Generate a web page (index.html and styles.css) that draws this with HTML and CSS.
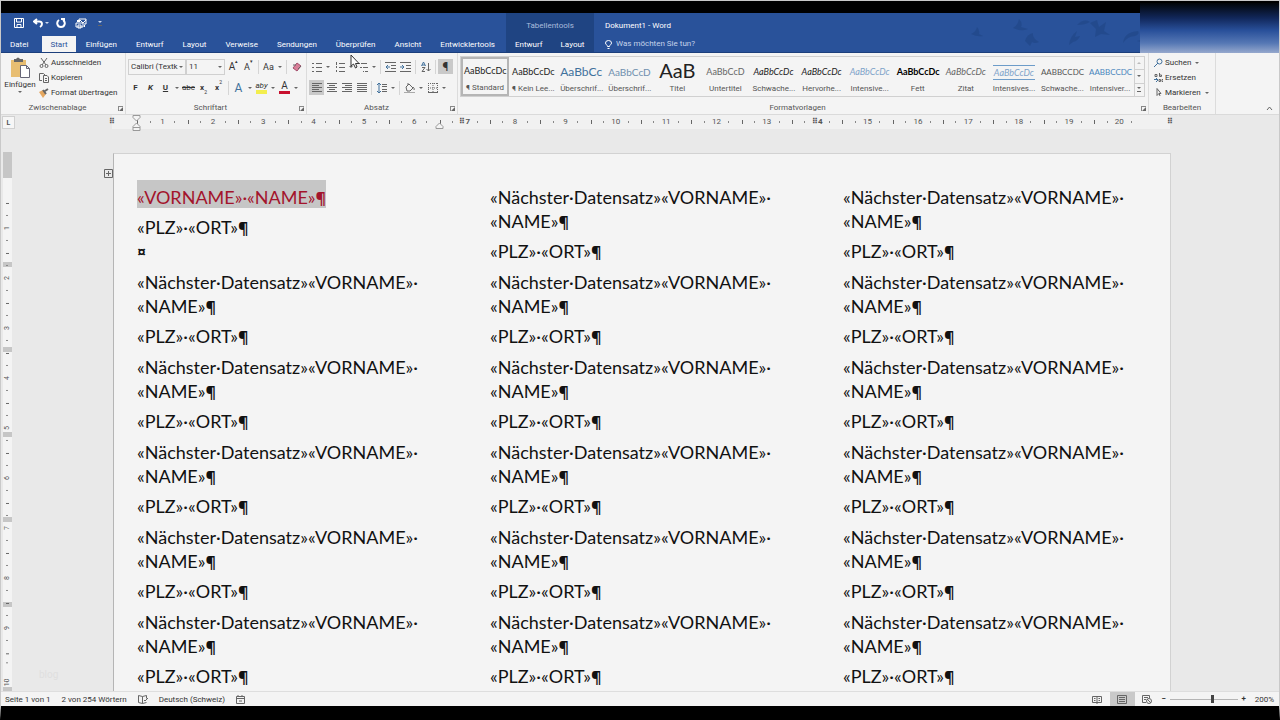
FILE: index.html
```
<!DOCTYPE html>
<html lang="de">
<head>
<meta charset="UTF-8">
<title>Dokument1 - Word</title>
<link rel="stylesheet" href="styles.css">
</head>
<body>
<header class="titlebar">
  <div class="bar-left">
    <div class="quick">
      <button aria-label="Speichern"><svg width="10" height="10" viewBox="0 0 10 10"><path d="M.5.5h9v9h-9zM2.500.5v3.500h5V.5M3 9.500V6.500h4v3"/></svg></button>
      <button aria-label="Rückgängig"><svg width="10" height="10" viewBox="0 0 10 10"><path class="bold" d="M4 1 1 3.500 4 6M1.500 3.500H6c4 0 3.500 4 1 5.500"/></svg><i class="caret"></i></button>
      <button aria-label="Wiederholen"><svg width="10" height="10" viewBox="0 0 10 10"><path class="bold" d="M3 2C0 4 1 9 5 9s5-5 2-7M5 1h3v3"/></svg></button>
      <button aria-label="Seriendruck"><svg width="12" height="11" viewBox="0 0 12 11"><path d="M1 5h7v4H1zM4 4V1h7v5H9M3 7h3v3H3zM5 2l3 3 3-3"/><path class="bold" d="M2 3h3M9 8h1"/></svg></button>
      <button aria-label="Schnellzugriff anpassen"><i class="caret lined"></i></button>
    </div>
    <nav class="tabs">
      <a href="#" class="file">Datei</a>
      <a href="#" class="active">Start</a>
      <a href="#">Einfügen</a>
      <a href="#">Entwurf</a>
      <a href="#">Layout</a>
      <a href="#">Verweise</a>
      <a href="#">Sendungen</a>
      <a href="#">Überprüfen</a>
      <a href="#">Ansicht</a>
      <a href="#">Entwicklertools</a>
    </nav>
  </div>
  <div class="bar-tools">
    <p>Tabellentools</p>
    <nav class="tabs">
      <a href="#">Entwurf</a>
      <a href="#">Layout</a>
    </nav>
  </div>
  <div class="bar-right">
    <h1>Dokument1 - Word</h1>
    <label class="tellme">
      <svg width="7" height="9" viewBox="0 0 7 9"><path d="M2.500 6.500C2.500 5 .5 4.500.5 3a3 2.500 0 0 1 6 0c0 1.500-2 2-2 3.500zM2.500 8.500h2"/></svg>
      <input type="text" placeholder="Was möchten Sie tun?" aria-label="Was möchten Sie tun?">
    </label>
  </div>
  <svg class="leaves" width="180" height="32" viewBox="0 0 180 32">
    <path d="M6 17q5-2 6-7 3 3 2 7l4 2q-6 1-12-2zM48 11q5-3 6-9 4 4 2 8l7 2q-7 3-15-1zM60 24q2-7 8-8-1 5 6 9-4 2-7 0l-2 4zM104 28q1-9 8-14l-2 6 5-1q-2 5-7 6zM112 8q7-7 13-3-5 3-13 3zM125 6l7-3 2 7 7-5-2 9 6 4-9-1-6 3 1-8zM158 26q1-11 15-12 2 3-3 5-7 0-12 7zM172 24l7-2 1 4z"/>
  </svg>
  <div class="shade"></div>
</header>

<section class="ribbon">
  <div class="group clipboard">
    <div class="tools">
      <button class="paste">
        <svg width="22" height="22" viewBox="0 0 22 22"><path fill="#e8be72" stroke="none" d="M2 3h15v17H2z"/><path fill="#666" stroke="none" d="M5 2h2q2-3 4 0h3v3H5z"/><path fill="#fff" stroke="#667" d="M11.500 8.500h6l3 3v9h-9zM17.500 8.500v3h3"/></svg>
        Einfügen
        <i class="caret"></i>
      </button>
      <div class="stack">
        <button><svg width="10" height="10" viewBox="0 0 10 10"><path d="m2 0 5 7M8 0 3 7"/><circle cx="2.500" cy="8" r="1.500"/><circle cx="7.500" cy="8" r="1.500"/></svg>Ausschneiden</button>
        <button><svg width="10" height="10" viewBox="0 0 10 10"><path d="M3 7.500H.5v-7h4L6 2M4.500 2.500H8l1.500 1.500v5.500h-5zM6 5.500h2M6 7.500h2"/></svg>Kopieren</button>
        <button><svg width="10" height="10" viewBox="0 0 10 10"><path fill="#e6a860" stroke="none" d="m0 4 4-2 3 4-3 4z"/><path class="bold" d="m4 2 3 4M6 3l3-2"/></svg>Format übertragen</button>
      </div>
    </div>
    <footer>Zwischenablage<i class="launcher"></i></footer>
  </div>

  <div class="group font">
    <div class="rows">
      <div class="row">
        <span class="combo family"><select aria-label="Schriftart"><option>Calibri (Textk</option></select></span>
        <span class="combo size"><select aria-label="Schriftgrad"><option>11</option></select></span>
        <button class="big">A<sup>▴</sup></button>
        <button class="small">A<sup>▾</sup></button>
        <i class="sep"></i>
        <button class="small">Aa</button><i class="caret"></i>
        <i class="sep"></i>
        <button aria-label="Formatierung löschen"><svg width="10" height="10" viewBox="0 0 10 10"><path fill="#d77f98" stroke="#a34d6b" d="m1 6 4-5 4 3-4 5z"/><path d="M1 3h3M6 7l3-3"/></svg></button>
      </div>
      <div class="row">
        <button><b>F</b></button>
        <button><b><em>K</em></b></button>
        <button><b><u>U</u></b></button><i class="caret"></i>
        <button><s>abc</s></button>
        <button><b>x</b><sub>2</sub></button>
        <button><b>x</b><sup>2</sup></button>
        <i class="sep"></i>
        <button class="effect">A</button><i class="caret"></i>
        <button class="marker">aby</button><i class="caret"></i>
        <button class="color">A</button><i class="caret"></i>
      </div>
    </div>
    <footer>Schriftart<i class="launcher"></i></footer>
  </div>

  <div class="group paragraph">
    <div class="rows">
      <div class="row">
        <button aria-label="Aufzählung"><svg width="10" height="10" viewBox="0 0 10 10"><path d="M0 1.500h2M0 5.500h2M0 9.500h2M4 1.500h6M4 5.500h6M4 9.500h6"/></svg></button><i class="caret"></i>
        <button aria-label="Nummerierung"><svg width="10" height="10" viewBox="0 0 10 10"><path d="M1.500 0v3M1.500 4v2M1.500 8v2M4 1.500h6M4 5.500h6M4 9.500h6"/></svg></button><i class="caret"></i>
        <button aria-label="Liste mit mehreren Ebenen"><svg width="10" height="10" viewBox="0 0 10 10"><path d="M0 1.500h2M2 5.500h2M5 9.500h1M3 1.500h6M5 5.500h5M7 9.500h3"/></svg></button><i class="caret"></i>
        <i class="sep"></i>
        <button aria-label="Einzug verkleinern"><svg width="11" height="10" viewBox="0 0 11 10"><path d="M0 .5h11M6 3.500h5M6 6.500h5M0 9.500h11"/><path class="blue" d="M5 5H1M3 3 1 5l2 2"/></svg></button>
        <button aria-label="Einzug vergrößern"><svg width="11" height="10" viewBox="0 0 11 10"><path d="M0 .5h11M6 3.500h5M6 6.500h5M0 9.500h11"/><path class="blue" d="M0 5h4M2 3l2 2-2 2"/></svg></button>
        <i class="sep"></i>
        <button aria-label="Sortieren"><svg width="10" height="10" viewBox="0 0 10 10"><path class="blue" d="m.5 4 2-4 2 4M1 3h3"/><path d="M1 5.500h3l-3 4h3M7.500 1v8M5.500 7l2 2 2-2"/></svg></button>
        <i class="sep"></i>
        <button class="on pilcrow">¶</button>
      </div>
      <div class="row">
        <button class="on" aria-label="Linksbündig"><svg width="10" height="9" viewBox="0 0 10 9"><path d="M0 .5h10M0 2.500h7M0 4.500h10M0 6.500h7M0 8.500h10"/></svg></button>
        <button aria-label="Zentriert"><svg width="10" height="9" viewBox="0 0 10 9"><path d="M0 .5h10M2 2.500h6M0 4.500h10M2 6.500h6M0 8.500h10"/></svg></button>
        <button aria-label="Rechtsbündig"><svg width="10" height="9" viewBox="0 0 10 9"><path d="M0 .5h10M3 2.500h7M0 4.500h10M3 6.500h7M0 8.500h10"/></svg></button>
        <button aria-label="Blocksatz"><svg width="10" height="9" viewBox="0 0 10 9"><path d="M0 .5h10M0 2.500h10M0 4.500h10M0 6.500h10M0 8.500h10"/></svg></button>
        <i class="sep"></i>
        <button aria-label="Zeilenabstand"><svg width="10" height="10" viewBox="0 0 10 10"><path d="M5 1.500h5M5 3.500h5M5 6.500h5M5 8.500h5"/><path class="blue" d="M2 0v10M0 2l2-2 2 2M0 8l2 2 2-2"/></svg></button><i class="caret"></i>
        <i class="sep"></i>
        <button aria-label="Schattierung"><svg width="12" height="10" viewBox="0 0 12 10"><path d="m2 4 3-3 4 4-3 3H3zM4 2V0M9 4q2 2 1 3"/><path stroke="#aaa" d="M0 9.500h11"/></svg></button><i class="caret"></i>
        <button aria-label="Rahmen"><svg width="10" height="10" viewBox="0 0 10 10"><path stroke-dasharray="1 1" d="M.5 0v9M5 0v9M9.500 0v9M0 .5h10M0 5h10"/><path d="M0 9.500h10"/></svg></button><i class="caret"></i>
      </div>
    </div>
    <footer>Absatz<i class="launcher"></i></footer>
  </div>

  <div class="group styles">
    <div class="gallery">
      <button class="selected"><span>AaBbCcDc</span>¶ Standard</button>
      <button><span>AaBbCcDc</span>¶ Kein Lee...</button>
      <button><span class="h1">AaBbCc</span>Überschrif...</button>
      <button><span class="h2">AaBbCcD</span>Überschrif...</button>
      <button><span class="title">AaB</span>Titel</button>
      <button><span class="grey">AaBbCcD</span>Untertitel</button>
      <button><span class="italic">AaBbCcDc</span>Schwache...</button>
      <button><span class="italic">AaBbCcDc</span>Hervorhe...</button>
      <button><span class="italic pale">AaBbCcDc</span>Intensive...</button>
      <button><span class="strong">AaBbCcDc</span>Fett</button>
      <button><span class="italic dim">AaBbCcDc</span>Zitat</button>
      <button><span class="italic pale ruled">AaBbCcDc</span>Intensives...</button>
      <button><span class="caps">AABBCCDC</span>Schwache...</button>
      <button><span class="caps link">AABBCCDC</span>Intensiver...</button>
      <div class="scroller">
        <button aria-label="Zurück"><i class="caret up"></i></button>
        <button aria-label="Weiter"><i class="caret"></i></button>
        <button aria-label="Mehr"><i class="caret lined"></i></button>
      </div>
    </div>
    <footer>Formatvorlagen<i class="launcher"></i></footer>
  </div>

  <div class="group editing">
    <div class="tools">
      <div class="stack">
        <button><svg width="9" height="9" viewBox="0 0 9 9"><circle class="blue" cx="5.500" cy="3.500" r="2.500"/><path class="blue" d="m4 5-4 4"/></svg>Suchen<i class="caret"></i></button>
        <button><svg width="9" height="10" viewBox="0 0 9 10"><path d="M1 3.500h2v-2H1zM5.500 0v3.500h2V2h-2"/><path class="blue" d="M0 6.500h3M2 5l2 2-2 2"/><path d="M5 6.500h1.500v2H5zM9 6.500H8v2h1"/></svg>Ersetzen</button>
        <button><svg width="9" height="9" viewBox="0 0 9 9"><path d="M3 .5v7l2-2h2zM5 5l1 3"/></svg>Markieren<i class="caret"></i></button>
      </div>
    </div>
    <footer>Bearbeiten</footer>
  </div>
  <button class="collapse" aria-label="Menüband reduzieren"><svg width="7" height="5" viewBox="0 0 7 5"><path d="m1 4 2.500-3L6 4"/></svg></button>
  <svg class="pointer" width="11" height="15" viewBox="0 0 11 15"><path d="M1 1v11l2.500-2 2 4L7 13 5.500 9.500H9z"/></svg>
</section>

<div class="ruler">
  <button class="tabstop" aria-label="Tabstopp">L</button>
  <ol>
    <li class="grid">⠿</li><li>1</li><li>2</li><li>3</li><li>4</li><li>5</li><li>6</li><li class="grid">⠿7</li><li>8</li><li>9</li><li>10</li><li>11</li><li>12</li><li>13</li><li class="grid">⠿4</li><li>15</li><li>16</li><li>17</li><li>18</li><li>19</li><li>20</li><li class="grid">⠿</li>
  </ol>
  <svg class="indent" width="9" height="17" viewBox="0 0 9 17"><path d="M1 .5h7v2L4.500 6 1 2.500zM4.500 8 8 11.500v4H1v-4zM1 12.500h7"/></svg>
  <svg class="indent right" width="9" height="17" viewBox="0 0 9 17"><path d="M4.500 8 8 11.500v2H1v-2z"/></svg>
</div>

<main>
  <ol class="side-ruler">
    <li>1</li><li>2</li><li>3</li><li>4</li><li>5</li><li>6</li><li>7</li><li>8</li><li>9</li><li>10</li>
  </ol>
  <div class="canvas">
    <button class="move" aria-label="Tabelle verschieben"><svg width="9" height="9" viewBox="0 0 9 9"><path d="M.5.5h8v8h-8zM4.500 2v5M2 4.500h5"/></svg></button>
    <article class="page">
      <table>
        <tr>
          <td><p><mark>«VORNAME»·«NAME»<b>¶</b></mark></p><p>«PLZ»·«ORT»<b>¶</b><br><b>¤</b></p></td>
          <td><p>«Nächster·Datensatz»«VORNAME»·<br>«NAME»<b>¶</b></p><p>«PLZ»·«ORT»<b>¶</b></p></td>
          <td><p>«Nächster·Datensatz»«VORNAME»·<br>«NAME»<b>¶</b></p><p>«PLZ»·«ORT»<b>¶</b></p></td>
        </tr>
        <tr>
          <td><p>«Nächster·Datensatz»«VORNAME»·<br>«NAME»<b>¶</b></p><p>«PLZ»·«ORT»<b>¶</b></p></td>
          <td><p>«Nächster·Datensatz»«VORNAME»·<br>«NAME»<b>¶</b></p><p>«PLZ»·«ORT»<b>¶</b></p></td>
          <td><p>«Nächster·Datensatz»«VORNAME»·<br>«NAME»<b>¶</b></p><p>«PLZ»·«ORT»<b>¶</b></p></td>
        </tr>
        <tr>
          <td><p>«Nächster·Datensatz»«VORNAME»·<br>«NAME»<b>¶</b></p><p>«PLZ»·«ORT»<b>¶</b></p></td>
          <td><p>«Nächster·Datensatz»«VORNAME»·<br>«NAME»<b>¶</b></p><p>«PLZ»·«ORT»<b>¶</b></p></td>
          <td><p>«Nächster·Datensatz»«VORNAME»·<br>«NAME»<b>¶</b></p><p>«PLZ»·«ORT»<b>¶</b></p></td>
        </tr>
        <tr>
          <td><p>«Nächster·Datensatz»«VORNAME»·<br>«NAME»<b>¶</b></p><p>«PLZ»·«ORT»<b>¶</b></p></td>
          <td><p>«Nächster·Datensatz»«VORNAME»·<br>«NAME»<b>¶</b></p><p>«PLZ»·«ORT»<b>¶</b></p></td>
          <td><p>«Nächster·Datensatz»«VORNAME»·<br>«NAME»<b>¶</b></p><p>«PLZ»·«ORT»<b>¶</b></p></td>
        </tr>
        <tr>
          <td><p>«Nächster·Datensatz»«VORNAME»·<br>«NAME»<b>¶</b></p><p>«PLZ»·«ORT»<b>¶</b></p></td>
          <td><p>«Nächster·Datensatz»«VORNAME»·<br>«NAME»<b>¶</b></p><p>«PLZ»·«ORT»<b>¶</b></p></td>
          <td><p>«Nächster·Datensatz»«VORNAME»·<br>«NAME»<b>¶</b></p><p>«PLZ»·«ORT»<b>¶</b></p></td>
        </tr>
        <tr>
          <td><p>«Nächster·Datensatz»«VORNAME»·<br>«NAME»<b>¶</b></p><p>«PLZ»·«ORT»<b>¶</b></p></td>
          <td><p>«Nächster·Datensatz»«VORNAME»·<br>«NAME»<b>¶</b></p><p>«PLZ»·«ORT»<b>¶</b></p></td>
          <td><p>«Nächster·Datensatz»«VORNAME»·<br>«NAME»<b>¶</b></p><p>«PLZ»·«ORT»<b>¶</b></p></td>
        </tr>
      </table>
    </article>
    <span class="watermark">blog</span>
  </div>
</main>

<footer class="status">
  <span>Seite 1 von 1</span>
  <span>2 von 254 Wörtern</span>
  <svg width="10" height="9" viewBox="0 0 10 9"><path d="M4.500 8.500V1.500L.5.5v7zM4.500 1.500 8.500.5v3M4.500 8.500l4-1M6 5l1 1 3-3"/></svg>
  <span>Deutsch (Schweiz)</span>
  <svg width="9" height="9" viewBox="0 0 9 9"><path d="M.5 1.500h8v7h-8zM0 3.500h9M2 0v2M6 0v2M3 6h3"/></svg>
  <div class="views">
    <button aria-label="Lesemodus"><svg width="10" height="9" viewBox="0 0 10 9"><path d="M.5 1.500h9v6h-9zM5 1v8M2 3.500h1.500M2 5.500h1.500M6.500 3.500H8M6.500 5.500H8"/></svg></button>
    <button class="on" aria-label="Drucklayout"><svg width="10" height="9" viewBox="0 0 10 9"><path d="M.5.5h9v8h-9zM2 2.500h6M2 4.500h6M2 6.500h6"/></svg></button>
    <button aria-label="Weblayout"><svg width="10" height="9" viewBox="0 0 10 9"><path d="M4 7.500H.5v-7h7V3M2 2.500h4M2 4.500h2"/><circle cx="7" cy="6" r="2.500"/><path d="m5 4 4 4"/></svg></button>
  </div>
  <div class="zoom">
    <button>−</button>
    <input type="range" aria-label="Zoom" min="0" max="100" value="63">
    <button>+</button>
  </div>
  <span>200%</span>
</footer>
</body>
</html>
```
FILE: styles.css
```
*, *:before, *:after{
  box-sizing: border-box;
}
body{
  margin: 0;
  height: 100vh;
  display: flex;
  flex-direction: column;
  overflow: hidden;
  background: #e9e9e9;
  border: 1px solid #c9c9c9;
  border-bottom: 14px solid #000;
  color: #333;
  font-family: Roboto, 'Open Sans', sans-serif;
  font-size: 8px;
  line-height: 12px;
}
p, h1, ol{
  margin: 0;
  padding: 0;
  font-size: 8px;
  font-weight: normal;
  list-style: none;
}
button, input, select{
  margin: 0;
  padding: 0;
  border: 0;
  background: none;
  color: inherit;
  font: inherit;
}
a{
  color: inherit;
  text-decoration: none;
}
svg{
  flex: none;
  fill: none;
  stroke: #666;
}
.bold{
  stroke-width: 2;
}
.blue{
  stroke: #41719c;
}
.caret{
  width: 8px;
  flex: none;
  display: flex;
  justify-content: center;
}
.caret:before{
  content: '';
  border: 2px solid transparent;
  border-top-color: #666;
  border-bottom: 0;
}
.caret.lined:before{
  width: 4px;
  height: 5px;
  border-top: 2px solid #666;
  background: linear-gradient(#666, #666) center bottom / 4px 1px no-repeat border-box;
}
.caret.up{
  transform: rotate(180deg);
  opacity: 0.4;
}

/* title bar */
.titlebar{
  position: relative;
  display: flex;
  flex: none;
  height: 52px;
  border-top: 12px solid #000;
  border-bottom: 1px solid #1c3f7c;
  background: #29529a;
  color: #fff;
}
.titlebar svg{
  stroke: #fff;
}
.bar-left, .bar-tools, .bar-right{
  display: flex;
  flex-direction: column;
  justify-content: space-between;
}
.bar-left{
  width: 505px;
}
.quick{
  display: flex;
  align-items: center;
  gap: 9px;
  height: 20px;
  padding-left: 13px;
}
.quick button{
  display: flex;
  align-items: center;
}
.quick button:nth-child(2){
  margin-right: -4px;
}
.quick .caret:before{
  border-top-color: #cdd9ee;
}
.tabs{
  display: flex;
  line-height: 15px;
}
.tabs a{
  padding: 1px 9px 0 10px;
  white-space: nowrap;
}
.tabs .file{
  padding: 1px 14px 0 9px;
}
.tabs .active{
  padding: 1px 8px 0;
  background: #f4f4f4;
  color: #29529a;
}
.bar-tools{
  width: 88px;
  background: #1f4482;
}
.bar-tools p, .bar-right h1{
  line-height: 25px;
}
.bar-tools p{
  height: 23px;
  text-align: center;
  color: #a9bcdd;
}
.bar-right h1{
  height: 23px;
}
.bar-tools .tabs a{
  padding: 1px 9px 0;
}
.bar-right{
  padding-left: 11px;
}
.tellme{
  display: flex;
  align-items: center;
  gap: 4px;
  height: 16px;
}
.tellme input{
  width: 120px;
}
.tellme input::placeholder{
  color: #c5d3ea;
}
.titlebar .leaves{
  position: absolute;
  right: 134px;
  top: 4px;
  fill: #1f4482;
  stroke: none;
  opacity: 0.5;
}
.shade{
  position: absolute;
  right: 0;
  top: -10px;
  width: 139px;
  height: 50px;
  background: linear-gradient(#020508, #11275a 30%, #29509a 55%, #5577b4 80%, #96a8cd);
}

/* ribbon */
.ribbon{
  position: relative;
  display: flex;
  flex: none;
  height: 61px;
  background: #f4f4f4;
}
.ribbon button{
  white-space: nowrap;
}
.group{
  display: flex;
  flex-direction: column;
  justify-content: space-between;
  padding-top: 2px;
  border-right: 1px solid #dcdcdc;
}
.group footer{
  position: relative;
  padding-right: 11px;
  text-align: center;
  color: #555;
}
.editing footer{
  padding-right: 0;
}
.launcher{
  position: absolute;
  right: 2px;
  top: 4px;
  width: 5px;
  height: 5px;
  border: solid #888;
  border-width: 1px 0 0 1px;
}
.launcher:after{
  content: '';
  position: absolute;
  right: 0;
  bottom: 0;
  border: 2px solid #666;
  border-top-color: transparent;
  border-left-color: transparent;
}
.clipboard{
  width: 125px;
}
.font{
  width: 181px;
}
.paragraph{
  width: 151px;
}
.styles{
  flex: 1;
  min-width: 0;
}
.editing{
  width: 67px;
}
.tools{
  display: flex;
}
.paste{
  width: 38px;
  display: flex;
  flex-direction: column;
  align-items: center;
  padding-top: 2px;
}
.stack{
  display: flex;
  flex-direction: column;
}
.stack button{
  display: flex;
  align-items: center;
  gap: 2px;
  height: 15px;
}
.editing .stack{
  padding-left: 5px;
}
.rows{
  display: flex;
  flex-direction: column;
  gap: 4px;
  padding: 3px 0 0 2px;
}
.row{
  display: flex;
  align-items: center;
  height: 17px;
}
.row button{
  width: 15px;
  height: 15px;
  display: flex;
  align-items: center;
  justify-content: center;
}
.row sup, .row sub{
  font-size: 5px;
  line-height: 5px;
}
.row sup{
  align-self: flex-start;
}
.row sub{
  align-self: flex-end;
}
.row .big{
  font-size: 10px;
  margin-left: 1px;
}
.row .small{
  font-size: 9px;
}
.row .pilcrow{
  font-size: 12px;
}
.row .on, .status .on{
  background: #c9c9c9;
}
.sep{
  width: 1px;
  height: 14px;
  margin: 0 2px;
  background: #d5d5d5;
}
.combo{
  display: flex;
  align-items: center;
  height: 16px;
  border: 1px solid #d0d0d0;
}
.combo select{
  appearance: none;
  width: 100%;
  padding-left: 2px;
  outline: 0;
}
.combo:after{
  content: '';
  flex: none;
  margin-right: 2px;
  border: 2px solid transparent;
  border-top-color: #666;
  border-bottom: 0;
}
.family{
  width: 58px;
}
.size{
  width: 39px;
}
.row .effect{
  font-size: 12px;
  color: #41719c;
}
.row .marker{
  box-shadow: inset 0 -4px #f3ee4e;
  padding-bottom: 3px;
  font-style: italic;
}
.row .color{
  box-shadow: inset 0 -3px #c8102e;
  padding-bottom: 3px;
  font-size: 10px;
}
.row .marker, .row .color{
  width: 11px;
  height: 13px;
  margin: 0 2px;
}

.gallery{
  display: flex;
  height: 41px;
  margin: 1px 3px 0 2px;
  border: 1px solid #d0d0d0;
}
.gallery > button{
  flex: 1;
  min-width: 0;
  padding: 0 3px;
  color: #555;
}
.gallery > .selected{
  border: 2px solid #b5b5b5;
  padding: 0 1px;
}
.gallery span{
  display: block;
  height: 20px;
  margin: 3px 0 1px;
  line-height: 20px;
  color: #222;
  font-family: Lato, sans-serif;
  font-size: 9px;
}
.gallery .selected span{
  margin-top: 1px;
}
.gallery .h1{
  font-size: 12px;
  color: #41719c;
}
.gallery .h2{
  font-size: 10px;
  color: #6f8fae;
}
.gallery .title{
  font-size: 20px;
  line-height: 16px;
}
.gallery .grey, .gallery .dim{
  color: #666;
}
.gallery .italic{
  font-style: italic;
}
.gallery .pale{
  color: #7fa3c9;
}
.gallery .strong{
  font-weight: bold;
  color: #000;
}
.gallery .caps{
  font-size: 8px;
  color: #555;
}
.gallery .link{
  color: #4a86bd;
}
.gallery .ruled{
  height: 15px;
  margin: 6px 0 3px;
  border: solid #6d9cc9;
  border-width: 1px 0;
  line-height: 13px;
}
.scroller{
  width: 10px;
  display: flex;
  flex-direction: column;
  border-left: 1px solid #d0d0d0;
}
.scroller button{
  flex: 1;
  display: flex;
  align-items: center;
}
.scroller button + button{
  border-top: 1px solid #d0d0d0;
}
.collapse{
  width: 63px;
  display: flex;
  align-items: flex-end;
  justify-content: flex-end;
  padding: 0 6px 3px 0;
}
.pointer{
  position: absolute;
  left: 349px;
  top: 1px;
  fill: #fff;
  stroke: #333;
}

/* rulers */
.ruler{
  position: relative;
  display: flex;
  flex: none;
  height: 17px;
  border-top: 1px solid #dadada;
  color: #555;
  font-size: 7px;
}
.tabstop{
  width: 13px;
  height: 13px;
  margin: 1px 0 0 1px;
  background: #f6f6f6;
  border: 1px solid #d0d0d0;
  font-weight: bold;
  line-height: 10px;
}
.ruler ol{
  flex: 1;
  display: flex;
  height: 14px;
  margin: 0 84px 0 72px;
}
.ruler li{
  flex: 1;
  text-align: center;
  line-height: 14px;
  background:
    linear-gradient(#666, #666) left center / 1px 4px no-repeat,
    linear-gradient(#888, #888) 25% center / 1px 2px no-repeat,
    linear-gradient(#888, #888) 75% center / 1px 2px no-repeat,
    #f1f1f1;
}
.ruler .grid{
  font-weight: bold;
}
.ruler li:first-child{
  background: linear-gradient(90deg, #e9e9e9 50%, #f1f1f1 50%);
}
.ruler li:last-child{
  background: linear-gradient(90deg, #f1f1f1 50%, #e9e9e9 50%);
}
.indent{
  position: absolute;
  left: 131px;
  top: 0;
  fill: #f4f4f4;
  stroke: #999;
}
.indent.right{
  left: 434px;
}
main{
  flex: 1;
  display: flex;
  min-height: 0;
  overflow: hidden;
}
.side-ruler{
  width: 9px;
  margin: 21px 0 0 2px;
  padding-top: 51px;
  display: flex;
  flex-direction: column;
  background:
    linear-gradient(#c6c6c6, #c6c6c6) top / 100% 26px no-repeat,
    repeating-linear-gradient(transparent 0 25px, #c6c6c6 25px 30px, transparent 30px 85px) 0 85px no-repeat,
    #f4f4f4;
}
.side-ruler li{
  flex: 3;
  display: flex;
  align-items: center;
  justify-content: center;
  writing-mode: vertical-rl;
  transform: rotate(180deg);
  font-size: 7px;
  color: #555;
  line-height: 9px;
  min-height: 0;
  background:
    linear-gradient(#666, #666) center bottom / 3px 1px no-repeat,
    linear-gradient(#888, #888) center 25% / 2px 1px no-repeat,
    linear-gradient(#888, #888) center 75% / 2px 1px no-repeat;
}
.side-ruler li:last-child{
  flex: 2;
  justify-content: flex-start;
  padding-top: 5px;
}

/* document */
.canvas{
  position: relative;
  flex: 1;
  display: flex;
  align-items: flex-start;
  padding: 22px 108px 0 92px;
}
.move{
  width: 9px;
  height: 9px;
  margin-top: 16px;
  line-height: 0;
}
.page{
  flex: 1;
  padding: 31px 0 40px 23px;
  background: #f4f4f4;
  border: 1px solid #d2d2d2;
  border-left-color: #b5b5b5;
}
table{
  width: 100%;
  border-collapse: collapse;
  table-layout: fixed;
  color: #111;
  font-family: Lato, 'Open Sans', sans-serif;
  line-height: 24px;
}
td{
  width: 353px;
  padding: 0 0 7px;
  vertical-align: top;
  white-space: nowrap;
}
td:last-child{
  width: auto;
}
td p{
  font-size: 18px;
}
td p + p{
  margin-top: 6px;
}
td b{
  font-family: 'Open Sans', sans-serif;
  font-size: 16px;
  line-height: 20px;
}
mark{
  padding: 6px 0 0;
  background: #c6c6c6;
  color: #a3142c;
}
.watermark{
  position: absolute;
  left: 27px;
  bottom: 10px;
  font-size: 10px;
  color: #dfdfdf;
}

/* status bar */
.status{
  display: flex;
  flex: none;
  align-items: center;
  gap: 11px;
  height: 15px;
  padding: 0 5px 0 4px;
  background: #f4f4f4;
  border-top: 1px solid #dedede;
}
.status span{
  padding-top: 1px;
}
.views{
  display: flex;
  margin-left: auto;
}
.views button{
  width: 25px;
  height: 14px;
  line-height: 0;
}
.zoom{
  display: flex;
  align-items: center;
  gap: 3px;
  margin: 0 -3px 0 -10px;
}
.zoom button{
  width: 6px;
  font-weight: bold;
}
.status input{
  appearance: none;
  width: 68px;
  height: 1px;
  background: #b5b5b5;
}
.status input::-webkit-slider-thumb{
  appearance: none;
  width: 3px;
  height: 8px;
  background: #444;
}
```
